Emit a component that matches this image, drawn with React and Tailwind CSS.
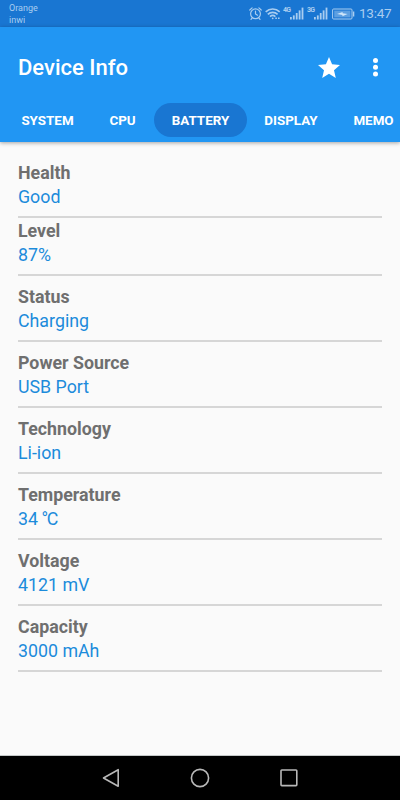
import React from "react";
import { clsx } from "clsx";

const tabs = [
  { name: "SYSTEM", width: "w-[87px]" },
  { name: "CPU", width: "w-[63px]" },
  { name: "BATTERY", width: "w-[93px]" },
  { name: "DISPLAY", width: "w-[88px]" },
  { name: "MEMO", width: "w-[77px]" },
];

const items = [
  { label: "Health", value: "Good" },
  { label: "Level", value: "87%", tight: true },
  { label: "Status", value: "Charging" },
  { label: "Power Source", value: "USB Port" },
  { label: "Technology", value: "Li-ion" },
  {
    label: "Temperature",
    value: (
      <>
        34 <span className="tracking-[-1.2px] -ml-px">°</span>C
      </>
    ),
  },
  { label: "Voltage", value: "4121 mV" },
  { label: "Capacity", value: "3000 mAh" },
];

function Signal({ type }) {
  return (
    <div className="flex items-start">
      <span className="text-[7px] leading-[7px] font-bold w-[7px] tracking-[-0.8px]">{type}</span>
      <svg width="14" height="13" viewBox="0 0 14 13" fill="currentColor">
        <rect x="0" y="10" width="1.8" height="2.5" />
        <rect x="2.9" y="8.4" width="1.8" height="4.1" />
        <rect x="5.8" y="6" width="1.8" height="6.5" />
        <rect x="8.7" y="3.4" width="1.8" height="9.1" />
        <rect x="11.6" y="0.6" width="1.8" height="11.9" />
      </svg>
    </div>
  );
}

function StatusBar() {
  return (
    <div className="h-[27px] shrink-0 bg-[#1976d2] text-[#a9cdf0] flex justify-between pl-[9px] pr-[9px]">
      <div className="text-[9px] leading-[12px] pt-[2px]">
        <p>Orange</p>
        <p>inwi</p>
      </div>
      <div className="flex items-center">
        <svg
          width="13"
          height="13"
          viewBox="0 0 13 13"
          fill="none"
          stroke="currentColor"
          strokeWidth="1.2"
          strokeLinecap="round"
        >
          <circle cx="6.5" cy="6.8" r="4.9" />
          <path d="M6.5 4v3l2 1.2M.8 3 3.1.9M12.2 3 9.9.9M3 11.2l-1 1.2M10 11.2l1 1.2" />
        </svg>
        <svg
          className="ml-[3px]"
          width="16"
          height="13"
          viewBox="0 0 16 13"
          fill="none"
          stroke="currentColor"
          strokeWidth="1.6"
        >
          <path d="M.7 4.8a10.2 10.2 0 0 1 14 0M2.8 7.3a7.2 7.2 0 0 1 9.8 0M5 9.6a4 4 0 0 1 5.4 0" />
          <circle cx="7.7" cy="11.3" r=".9" fill="currentColor" stroke="none" />
          <path d="M10.3 11.2h1.6M13 11.2h1.6" />
        </svg>
        <div className="ml-[2px]">
          <Signal type="4G" />
        </div>
        <div className="ml-[3px]">
          <Signal type="3G" />
        </div>
        <svg
          className="ml-[4px]"
          width="23"
          height="12"
          viewBox="0 0 23 12"
          fill="none"
          stroke="currentColor"
        >
          <rect x=".6" y="1" width="19.4" height="10" rx="1" />
          <rect x="2.2" y="2.6" width="16.2" height="6.8" fill="#5c9fe1" stroke="none" />
          <path d="M5 6.1 10.6 4v1.3l5 .6-5.2 2.3V6.9z" fill="#cfe6fa" stroke="none" />
          <path d="M21.6 3.5v5" strokeWidth="1.4" />
        </svg>
        <span className="ml-[4px] text-[13.6px] leading-[27px] w-[32px] whitespace-nowrap tracking-[-0.3px]">
          13:47
        </span>
      </div>
    </div>
  );
}

function Header() {
  return (
    <header className="relative shrink-0 h-[115px] bg-[#2196f3] text-white flex flex-col shadow-[0_1px_4px_rgba(0,0,0,0.35)]">
      <div className="h-[76px] flex items-center pt-[5px] pl-[18px] pr-[22px]">
        <h1 className="flex-1 text-[22px] font-medium leading-none">Device Info</h1>
        <svg width="22" height="21" viewBox="2 2 20 19" fill="currentColor">
          <path d="M12 17.27 18.18 21l-1.64-7.03L22 9.24l-7.19-.61L12 2 9.19 8.63 2 9.24l5.46 4.73L5.82 21z" />
        </svg>
        <svg className="ml-[33px]" width="5" height="19" viewBox="0 0 5 19" fill="currentColor">
          <circle cx="2.5" cy="2.6" r="2.5" />
          <circle cx="2.5" cy="9.3" r="2.5" />
          <circle cx="2.5" cy="16" r="2.5" />
        </svg>
      </div>
      <nav className="flex pl-[4px] overflow-hidden">
        {tabs.map((tab) => (
          <div
            key={tab.name}
            className={clsx(
              "h-[34px] shrink-0 rounded-full flex items-center justify-center pt-[2px] text-[13.4px] font-bold",
              tab.width,
              tab.name === "BATTERY" && "bg-[#1976d2]"
            )}
          >
            {tab.name}
          </div>
        ))}
      </nav>
    </header>
  );
}

function InfoRow({ label, value, tight }) {
  return (
    <div
      className={clsx(
        "border-b-2 border-[#d6d6d6] pb-[7px] text-[17.8px] leading-[24px]",
        tight ? "pt-px" : "pt-[9px]"
      )}
    >
      <p className="font-bold text-[#6f6f6f]">{label}</p>
      <p className="text-[#1c8bdb]">{value}</p>
    </div>
  );
}

function NavBar() {
  return (
    <div className="h-[45px] shrink-0 bg-black border-t border-[#c4c8c8]">
      <svg
        width="400"
        height="44"
        viewBox="0 0 400 44"
        fill="none"
        stroke="#b8b8b8"
        strokeWidth="1.6"
        strokeLinejoin="round"
      >
        <path d="M118.2 13.7v16.6L103.5 22z" />
        <circle cx="200" cy="22" r="8.6" />
        <rect x="281" y="14" width="15.8" height="15.6" rx=".8" />
      </svg>
    </div>
  );
}

export default function App() {
  return (
    <div className="w-[400px] h-[800px] overflow-hidden flex flex-col bg-[#fafafa] font-[Roboto,sans-serif]">
      <StatusBar />
      <Header />
      <main className="flex-1 px-[18px] pt-[10px]">
        {items.map((item) => (
          <InfoRow key={item.label} {...item} />
        ))}
      </main>
      <NavBar />
    </div>
  );
}
